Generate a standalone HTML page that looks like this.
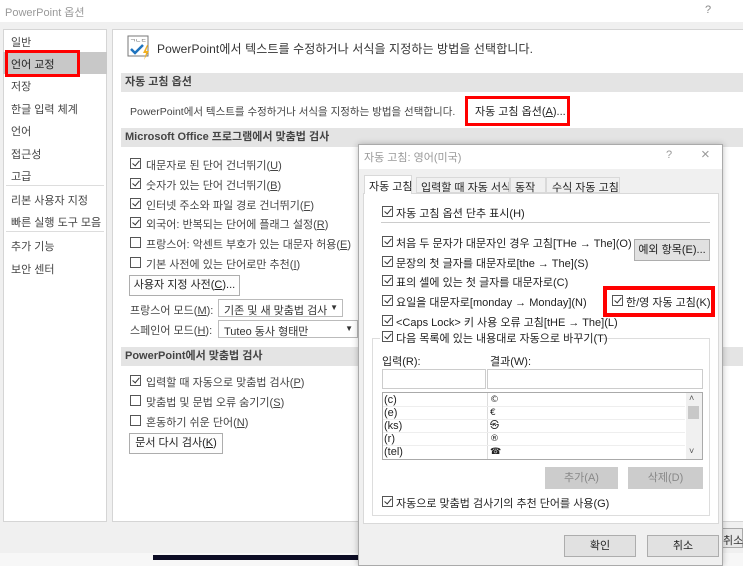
<!DOCTYPE html>
<html><head><meta charset="utf-8">
<style>
*{margin:0;padding:0;box-sizing:border-box}
body{width:743px;height:566px;overflow:hidden;background:#f0f0f0;font-family:"Liberation Sans","Noto Sans CJK KR",sans-serif;font-size:11px;color:#444;position:relative}
.a{position:absolute;white-space:nowrap}
.cb{position:absolute;width:11px;height:11px;border:1px solid #555;background:#fff}
.cb.c::after{content:"";position:absolute;left:3px;top:0px;width:3px;height:6px;border:solid #333;border-width:0 1.3px 1.3px 0;transform:rotate(40deg)}
.hdr{position:absolute;background:#e4e4e4;font-weight:bold;color:#444;padding-left:4px;line-height:19px}
.btn{position:absolute;border:1px solid #adadad;background:#e1e1e1;text-align:center;color:#222}
.d{color:#222}
</style></head><body>
<div class="a" style="left:0;top:0;width:743px;height:22px;background:#fff"></div>
<div class="a" style="left:5px;top:4px;color:#999;font-size:11px">PowerPoint 옵션</div>
<div class="a" style="left:705px;top:4px;color:#888">?</div>
<!-- left nav -->
<div class="a" style="left:3px;top:29px;width:104px;height:493px;background:#fff;border:1px solid #d5d5d5"></div>
<div class="a" style="left:3px;top:52px;width:104px;height:22px;background:#c8c8c8"></div>
<div class="a" style="left:5px;top:50px;width:75px;height:27px;border:3px solid #f00"></div>
<div class="a" style="left:11px;top:34px">일반</div>
<div class="a" style="left:11px;top:56px;color:#222">언어 교정</div>
<div class="a" style="left:11px;top:78px">저장</div>
<div class="a" style="left:11px;top:101px">한글 입력 체계</div>
<div class="a" style="left:11px;top:123px">언어</div>
<div class="a" style="left:11px;top:146px">접근성</div>
<div class="a" style="left:11px;top:168px">고급</div>
<div class="a" style="left:6px;top:185px;width:98px;height:1px;background:#ddd"></div>
<div class="a" style="left:11px;top:192px">리본 사용자 지정</div>
<div class="a" style="left:11px;top:214px">빠른 실행 도구 모음</div>
<div class="a" style="left:6px;top:231px;width:98px;height:1px;background:#ddd"></div>
<div class="a" style="left:11px;top:238px">추가 기능</div>
<div class="a" style="left:11px;top:261px">보안 센터</div>
<!-- main -->
<div class="a" style="left:112px;top:29px;width:640px;height:493px;background:#fff;border:1px solid #d5d5d5"></div>
<svg class="a" style="left:127px;top:35px" width="26" height="26" viewBox="0 0 26 26"><rect x="1" y="1" width="20" height="20" fill="#fff" stroke="#777"/><text x="3" y="9" font-size="6" fill="#555" font-family="Liberation Sans">ᄀᄂᄃ</text><path d="M4 14l4 4 8-8" stroke="#1e73be" stroke-width="2.5" fill="none"/><path d="M20 10l-4 8h3l-2 7 5-9h-3l2-6z" fill="#f2b01e"/></svg>
<div class="a" style="left:157px;top:40px;font-size:12px;color:#333;letter-spacing:0.1px">PowerPoint에서 텍스트를 수정하거나 서식을 지정하는 방법을 선택합니다.</div>
<div class="hdr" style="left:121px;top:73px;width:630px">자동 고침 옵션</div>
<div class="a" style="left:130px;top:104px;font-size:10.5px">PowerPoint에서 텍스트를 수정하거나 서식을 지정하는 방법을 선택합니다.</div>
<div class="a" style="left:465px;top:96px;width:105px;height:30px;border:3px solid #f00;background:#fff"></div>
<div class="a" style="left:475px;top:103px;color:#222">자동 고침 옵션(<u>A</u>)...</div>
<div class="hdr" style="left:121px;top:128px;width:630px">Microsoft Office 프로그램에서 맞춤법 검사</div>
<div class="cb c" style="left:130px;top:158px"></div><div class="a" style="left:146px;top:157px">대문자로 된 단어 건너뛰기(<u>U</u>)</div>
<div class="cb c" style="left:130px;top:178px"></div><div class="a" style="left:146px;top:177px">숫자가 있는 단어 건너뛰기(<u>B</u>)</div>
<div class="cb c" style="left:130px;top:198px"></div><div class="a" style="left:146px;top:197px">인터넷 주소와 파일 경로 건너뛰기(<u>F</u>)</div>
<div class="cb c" style="left:130px;top:217px"></div><div class="a" style="left:146px;top:216px">외국어: 반복되는 단어에 플래그 설정(<u>R</u>)</div>
<div class="cb" style="left:130px;top:237px"></div><div class="a" style="left:146px;top:236px">프랑스어: 악센트 부호가 있는 대문자 허용(<u>E</u>)</div>
<div class="cb" style="left:130px;top:257px"></div><div class="a" style="left:146px;top:256px">기본 사전에 있는 단어로만 추천(<u>I</u>)</div>
<div class="btn" style="left:129px;top:275px;width:111px;height:21px;line-height:19px;background:#fdfdfd">사용자 지정 사전(<u>C</u>)...</div>
<div class="a" style="left:130px;top:302px">프랑스어 모드(<u>M</u>):</div>
<div class="a" style="left:218px;top:299px;width:125px;height:18px;border:1px solid #bbb;background:#fff;padding:2px 5px;color:#333">기존 및 새 맞춤법 검사<span style="position:absolute;right:4px;top:3px;font-size:8px">▼</span></div>
<div class="a" style="left:130px;top:322px">스페인어 모드(<u>H</u>):</div>
<div class="a" style="left:218px;top:320px;width:140px;height:18px;border:1px solid #bbb;background:#fff;padding:2px 5px;color:#333">Tuteo 동사 형태만<span style="position:absolute;right:4px;top:3px;font-size:8px">▼</span></div>
<div class="hdr" style="left:121px;top:347px;width:630px">PowerPoint에서 맞춤법 검사</div>
<div class="cb c" style="left:130px;top:375px"></div><div class="a" style="left:146px;top:374px">입력할 때 자동으로 맞춤법 검사(<u>P</u>)</div>
<div class="cb" style="left:130px;top:395px"></div><div class="a" style="left:146px;top:394px">맞춤법 및 문법 오류 숨기기(<u>S</u>)</div>
<div class="cb" style="left:130px;top:415px"></div><div class="a" style="left:146px;top:414px">혼동하기 쉬운 단어(<u>N</u>)</div>
<div class="btn" style="left:129px;top:433px;width:94px;height:21px;line-height:19px;background:#fdfdfd">문서 다시 검사(<u>K</u>)</div>
<div class="a" style="left:0;top:553px;width:743px;height:13px;background:#f7f7f7"></div>
<div class="a" style="left:153px;top:555px;width:210px;height:5px;background:#0d0d25"></div>
<div class="a" style="left:720px;top:528px;width:23px;height:20px;border:1px solid #aaa;background:#e8e8e8;color:#333;padding:3px 2px">취소</div>
<!-- dialog -->
<div class="a" style="left:358px;top:144px;width:365px;height:422px;background:#f0f0f0;border:1px solid #aaa;box-shadow:0 0 6px rgba(0,0,0,.25)"></div>
<div class="a" style="left:359px;top:145px;width:363px;height:24px;background:#fff"></div>
<div class="a" style="left:364px;top:149px;color:#999">자동 고침: 영어(미국)</div>
<div class="a" style="left:666px;top:149px;color:#999">?</div>
<div class="a" style="left:701px;top:146px;color:#999;font-size:15px">×</div>
<div class="a" style="left:363px;top:193px;width:356px;height:331px;background:#fff;border:1px solid #d9d9d9"></div>
<div class="a" style="left:364px;top:175px;width:48px;height:19px;background:#fff;border:1px solid #d9d9d9;border-bottom:none;padding:2px 4px;color:#222">자동 고침</div>
<div class="a" style="left:416px;top:177px;width:94px;height:16px;background:#f0f0f0;border:1px solid #d9d9d9;padding:1px 4px;color:#222;overflow:hidden">입력할 때 자동 서식</div>
<div class="a" style="left:510px;top:177px;width:36px;height:16px;border:1px solid #d9d9d9;padding:1px 4px;color:#222">동작</div>
<div class="a" style="left:546px;top:177px;width:74px;height:16px;border:1px solid #d9d9d9;padding:1px 5px;color:#222">수식 자동 고침</div>
<div class="cb c" style="left:382px;top:206px"></div><div class="a d" style="left:396px;top:205px">자동 고침 옵션 단추 표시(H)</div>
<div class="a" style="left:381px;top:222px;width:329px;height:1px;background:#ccc"></div>
<div class="cb c" style="left:382px;top:236px"></div><div class="a d" style="left:396px;top:235px">처음 두 문자가 대문자인 경우 고침[THe → The](O)</div>
<div class="cb c" style="left:382px;top:256px"></div><div class="a d" style="left:396px;top:255px">문장의 첫 글자를 대문자로[the → The](S)</div>
<div class="cb c" style="left:382px;top:275px"></div><div class="a d" style="left:396px;top:274px">표의 셀에 있는 첫 글자를 대문자로(C)</div>
<div class="cb c" style="left:382px;top:295px"></div><div class="a d" style="left:396px;top:294px">요일을 대문자로[monday → Monday](N)</div>
<div class="cb c" style="left:382px;top:315px"></div><div class="a d" style="left:396px;top:314px">&lt;Caps Lock&gt; 키 사용 오류 고침[tHE → The](L)</div>
<div class="btn" style="left:634px;top:239px;width:76px;height:22px;line-height:20px">예외 항목(E)...</div>
<div class="a" style="left:603px;top:286px;width:112px;height:31px;border:4px solid #f00;background:#fff"></div>
<div class="cb c" style="left:612px;top:295px"></div><div class="a d" style="left:626px;top:294px">한/영 자동 고침(K)</div>
<div class="a" style="left:372px;top:338px;width:338px;height:178px;border:1px solid #ddd"></div>
<div class="a" style="left:380px;top:332px;width:220px;height:12px;background:#fff"></div>
<div class="cb c" style="left:382px;top:331px"></div><div class="a d" style="left:396px;top:330px">다음 목록에 있는 내용대로 자동으로 바꾸기(T)</div>
<div class="a d" style="left:382px;top:353px">입력(R):</div>
<div class="a d" style="left:490px;top:353px">결과(W):</div>
<div class="a" style="left:382px;top:369px;width:104px;height:20px;border:1px solid #ccc"></div>
<div class="a" style="left:487px;top:369px;width:216px;height:20px;border:1px solid #ccc"></div>
<div class="a" style="left:382px;top:392px;width:321px;height:68px;border:1px solid #aaa;background:#fff"></div>
<div class="a" style="left:487px;top:393px;width:1px;height:66px;background:#ddd"></div>
<div class="a" style="left:686px;top:393px;width:16px;height:66px;background:#f0f0f0"></div>
<div class="a" style="left:688px;top:406px;width:11px;height:13px;background:#c8c8c8"></div>
<div class="a" style="left:689px;top:393px;font-size:9px;color:#555">˄</div>
<div class="a" style="left:689px;top:446px;font-size:9px;color:#555">˅</div>
<div class="a d" style="left:384px;top:394px;line-height:13px">(c)<br>(e)<br>(ks)<br>(r)<br>(tel)</div>
<div class="a d" style="left:490px;top:394px;line-height:13px;font-family:'DejaVu Sans',sans-serif;font-size:9px">©<br>€<br>㉿<br>®<br>☎</div>
<div class="a" style="left:383px;top:406px;width:302px;height:1px;background:#eee"></div>
<div class="a" style="left:383px;top:419px;width:302px;height:1px;background:#eee"></div>
<div class="a" style="left:383px;top:432px;width:302px;height:1px;background:#eee"></div>
<div class="a" style="left:383px;top:445px;width:302px;height:1px;background:#eee"></div>
<div class="a" style="left:545px;top:467px;width:73px;height:22px;background:#cccccc;color:#888;text-align:center;line-height:22px">추가(A)</div>
<div class="a" style="left:628px;top:467px;width:75px;height:22px;background:#cccccc;color:#888;text-align:center;line-height:22px">삭제(D)</div>
<div class="cb c" style="left:382px;top:496px"></div><div class="a d" style="left:396px;top:495px">자동으로 맞춤법 검사기의 추천 단어를 사용(G)</div>
<div class="btn" style="left:564px;top:535px;width:72px;height:22px;line-height:20px">확인</div>
<div class="btn" style="left:647px;top:535px;width:72px;height:22px;line-height:20px">취소</div>
</body></html>
